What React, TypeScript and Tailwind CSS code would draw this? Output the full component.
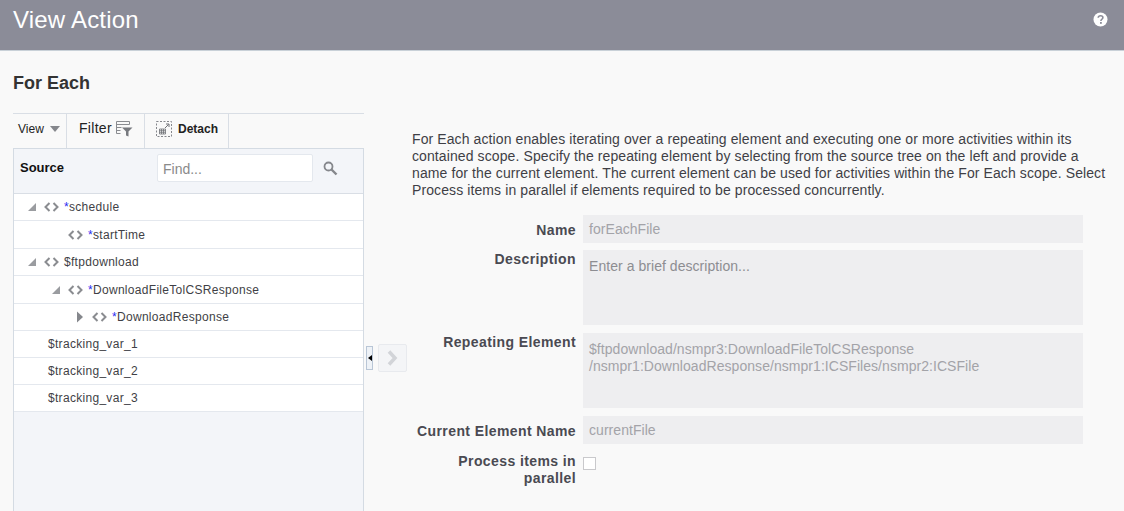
import React from "react";

const Tag = () => (
  <svg width="15" height="10" viewBox="0 0 15 10" className="shrink-0" fill="none" stroke="#8a8c90" strokeWidth="2">
    <path d="M5.5 1 1.500 5l4 4M9.500 1l4 4-4 4" />
  </svg>
);

const Down = () => (
  <svg width="10" height="10" viewBox="0 0 10 10" className="shrink-0"><path d="M9 1v8H1z" fill="#9a9ca0" /></svg>
);

const Right = () => (
  <svg width="8" height="12" viewBox="0 0 8 12" className="shrink-0"><path d="M1 0.5 7 6l-6 5.500z" fill="#85878c" /></svg>
);

function Row({ pad, tw, twist, tag = true, star, name, h }: { pad: string; tw?: "d" | "r"; twist?: boolean; tag?: boolean; star?: boolean; name: string; h: string }) {
  return (
    <div className={`flex items-center border-b border-[#e4e8ee] bg-white text-[12px] tracking-[0.3px] text-[#3f3f46] ${pad} ${h}`}>
      {twist !== false && (
        <span className={`flex items-center shrink-0 ${tw === "r" ? "w-[16px]" : "w-[17px]"}`}>{tw === "d" ? <Down /> : tw === "r" ? <Right /> : null}</span>
      )}
      {tag && <Tag />}
      <span className={tag ? "ml-[5px]" : ""}>
        {star && <span className="text-[#2b2bf0]">*</span>}
        {name}
      </span>
    </div>
  );
}

function Field({ label, children, className, pt }: { label: React.ReactNode; children: React.ReactNode; className?: string; pt: string }) {
  return (
    <div className={`flex ${className ?? ""}`}>
      <div className={`w-[164px] shrink-0 text-right font-bold text-[#4a4a52] text-[14px] tracking-[0.4px] leading-[17px] ${pt}`}>{label}</div>
      <div className="ml-[7px] w-[500px] tracking-[0.05px]">{children}</div>
    </div>
  );
}

export default function App() {
  return (
    <div className="h-[511px] w-[1124px] overflow-hidden bg-[#f9f9f9] font-['Liberation_Sans',Arial,sans-serif]">
      <header className="flex h-[51px] items-start justify-between border-b border-[#c9d1d8] bg-[#8b8c98] pl-[13px] pr-[16px]">
        <h1 className="text-[24px] leading-[28px] tracking-[0.2px] pt-[6px] text-white">View Action</h1>
        <svg width="15" height="15" viewBox="0 0 15 15" className="mt-[12px]">
          <circle cx="7.500" cy="7.500" r="7" fill="#fff" />
          <path d="M5.200 5.800C5.300 4.400 6.300 3.700 7.600 3.700c1.400 0 2.300.8 2.300 1.900 0 1.700-2 1.600-2 3.300" fill="none" stroke="#8b8c98" strokeWidth="1.600" />
          <rect x="7" y="10" width="1.800" height="1.800" fill="#8b8c98" />
        </svg>
      </header>

      <h2 className="pl-[13px] pt-[22px] text-[18px] leading-[20px] font-bold text-[#333]">For Each</h2>

      <div className="flex">
        <section className="ml-[13px] mt-[20px] w-[351px] shrink-0">
          <div className="flex h-[35px] border-t border-[#d9dee5] text-[#222]">
            <div className="flex w-[54px] items-center border-r border-[#d9dee5] pb-[5px] pl-[5px] text-[12px]">
              View
              <svg width="10" height="6" viewBox="0 0 10 6" className="ml-[6px]"><path d="M0 0h10L5 6z" fill="#85878c" /></svg>
            </div>
            <div className="flex w-[78px] items-center border-r border-[#d9dee5] pb-[5px] pl-[12px] text-[14px] tracking-[0.3px]">
              Filter
              <svg width="17" height="16" viewBox="0 0 17 16" className="ml-[4px]" fill="none">
                <path d="M.5.500h13M.5 3.500h13M.5 6.500h5M.5 9.500h4M.5 12.500h4" stroke="#8a8c90" />
                <path d="M.5.500v12M13.500.500v3" stroke="#8a8c90" />
                <path d="M6 6.500h10.500l-4 4v5l-2.500-1v-4z" fill="#77797e" />
              </svg>
            </div>
            <div className="flex w-[84px] items-center border-r border-[#d9dee5] pb-[5px] pl-[11px] text-[12px] font-bold">
              <svg width="16" height="16" viewBox="0 0 16 16" className="mr-[6px]" fill="none">
                <rect x=".5" y=".5" width="15" height="15" stroke="#85878c" strokeDasharray="2 1.500" />
                <path d="M3.500 8h6v5h-6zM3.500 9.700h6M3.500 11.300h6M5.500 8v5M7.500 8v5" stroke="#6f7176" strokeWidth=".8" />
                <path d="M9 7l3.500-3.500M10 3h3v3" stroke="#6f7176" />
              </svg>
              Detach
            </div>
          </div>

          <div className="h-[363px] border-x border-t border-[#d4dbe3] bg-[#f3f5f9]">
            <div className="flex h-[45px] items-center border-b border-[#d9dee5] pb-[6px] pl-[6px]">
              <span className="w-[137px] text-[13px] font-bold text-[#111]">Source</span>
              <div className="flex h-[28px] w-[156px] items-center rounded-[2px] border border-[#e4e8ee] bg-white pl-[5px] pt-[2px] text-[14px] text-[#8a8a8a]">Find...</div>
              <svg width="15" height="15" viewBox="0 0 15 15" className="ml-[10px]" fill="none" stroke="#85878c">
                <circle cx="5.500" cy="5.500" r="4" strokeWidth="1.800" />
                <path d="M8.500 8.500l5 5" strokeWidth="2.400" />
              </svg>
            </div>
            <Row h="h-[27px]" pad="pl-[13px]" tw="d" star name="schedule" />
            <Row h="h-[28px]" pad="pl-[54px]" twist={false} star name="startTime" />
            <Row h="h-[27px]" pad="pl-[13px]" tw="d" name="$ftpdownload" />
            <Row h="h-[28px]" pad="pl-[37px]" tw="d" star name="DownloadFileTolCSResponse" />
            <Row h="h-[27px]" pad="pl-[62px]" tw="r" star name="DownloadResponse" />
            <Row h="h-[27px]" pad="pl-[34px]" twist={false} tag={false} name="$tracking_var_1" />
            <Row h="h-[27px]" pad="pl-[34px]" twist={false} tag={false} name="$tracking_var_2" />
            <Row h="h-[27px]" pad="pl-[34px]" twist={false} tag={false} name="$tracking_var_3" />
          </div>
        </section>

        <div className="ml-[2px] mt-[251px] flex h-[28px] shrink-0 items-center">
          <div className="flex h-[24px] w-[7px] items-center justify-center border border-[#b9c6d6] bg-[#eef2f7]">
            <svg width="4" height="6" viewBox="0 0 4 6"><path d="M4 0v6L0 3z" fill="#000" /></svg>
          </div>
          <div className="ml-[5px] flex h-[28px] w-[29px] items-center justify-center rounded-[2px] border border-[#e8eaee] bg-[#f4f5f7]">
            <svg width="11" height="16" viewBox="0 0 11 16" fill="none" stroke="#d2d4d8" strokeWidth="3.500"><path d="M2 1.500 8 8l-6 6.500" /></svg>
          </div>
        </div>

        <main className="ml-[5px] mt-[38px] w-[700px] text-[14px]">
          <p className="w-[698px] leading-[17px] tracking-[0.1px] text-[#3f3f46]">
            For Each action enables iterating over a repeating element and executing one or more activities within its contained scope. Specify the repeating element by selecting from the source tree on the left and provide a name for the current element. The current element can be used for activities within the For Each scope. Select Process items in parallel if elements required to be processed concurrently.
          </p>
          <div className="mt-[16px] flex flex-col">
            <Field label="Name" pt="pt-[7px]">
              <div className="flex h-[28px] items-center bg-[#eeeef0] px-[6px] text-[#a3a3a8]">forEachFile</div>
            </Field>
            <Field label="Description" className="mt-[7px]" pt="pt-[1px]">
              <div className="h-[75px] bg-[#eeeef0] px-[6px] pt-[8px] leading-[17px] text-[#8d8d92]">Enter a brief description...</div>
            </Field>
            <Field label="Repeating Element" className="mt-[8px]" pt="pt-[1px]">
              <div className="h-[75px] bg-[#eeeef0] px-[6px] pt-[8px] leading-[17px] text-[#a3a3a8]">
                $ftpdownload/nsmpr3:DownloadFileTolCSResponse
                <br />
                /nsmpr1:DownloadResponse/nsmpr1:ICSFiles/nsmpr2:ICSFile
              </div>
            </Field>
            <Field label="Current Element Name" className="mt-[8px]" pt="pt-[7px]">
              <div className="flex h-[28px] items-center bg-[#eeeef0] px-[6px] pt-[1px] text-[#a3a3a8]">currentFile</div>
            </Field>
            <Field label={<>Process items in<br />parallel</>} className="mt-[4px]" pt="pt-[5px]">
              <div className="mt-[9px] h-[13px] w-[13px] border border-[#c9c9cc] bg-white" />
            </Field>
          </div>
        </main>
      </div>
    </div>
  );
}
